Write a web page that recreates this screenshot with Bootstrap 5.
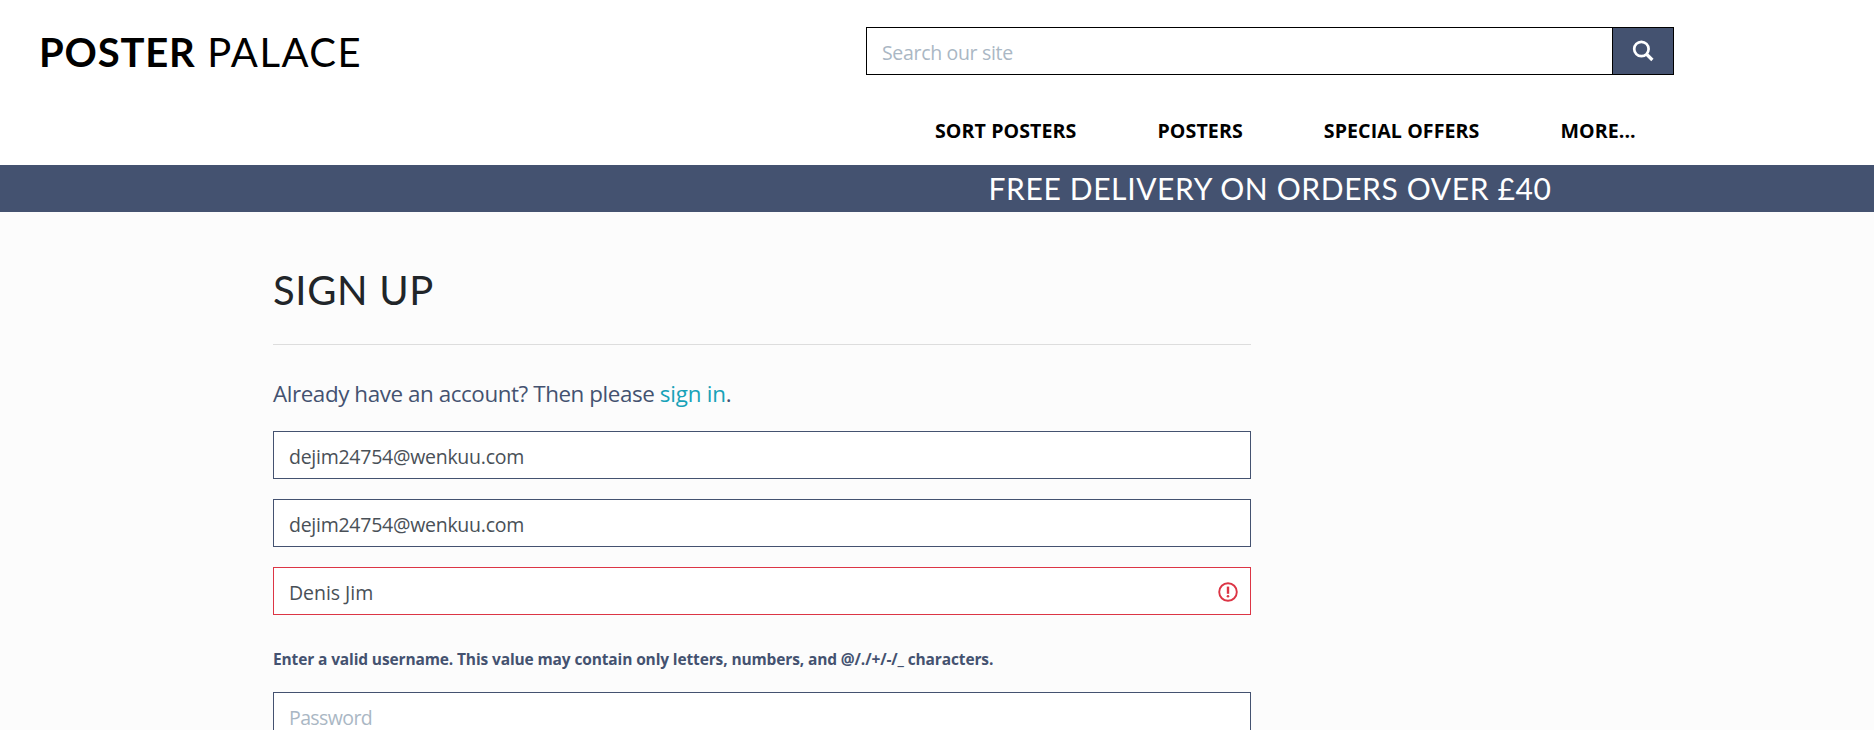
<!DOCTYPE html>
<html lang="en">
<head>
<meta charset="utf-8">
<meta name="viewport" content="width=device-width, initial-scale=1">
<title>Poster Palace - Sign Up</title>
<link rel="stylesheet" href="https://cdn.jsdelivr.net/npm/bootstrap@5.3.0/dist/css/bootstrap.min.css">
<style>
  :root { --slate: #445270; }
  html, body { height: 100%; overflow: hidden; }
  body { font-family: "Open Sans", "Noto Sans", sans-serif; background: #fcfcfc; }
  .display-font { font-family: Lato, sans-serif; line-height: 1.2; }
  .site-header { height: 165px; padding-left: 39px; }
  .brand { font-size: 40px; padding-top: 28px; color: #000; letter-spacing: 1.5px; }
  .brand strong { letter-spacing: .8px; font-weight: 700; }
  .header-side { width: 808px; margin-right: 200px; padding-top: 27px; }
  .form-control { height: 48px; padding: 3px 15px 0; border-radius: 0; font-size: 19.5px; letter-spacing: -.26px; color: #495057; background-color: #fff; border-color: var(--slate); }
  .form-control::placeholder { color: #aab7c4; opacity: 1; letter-spacing: -.6px; }
  .search-box .form-control { border-color: #000; }
  .search-box .form-control::placeholder { letter-spacing: -.32px; }
  .btn-search { width: 62px; border: 1px solid #000; border-radius: 0; background: var(--slate); padding: 0 0 1px; }
  .site-nav { gap: 81px; margin-top: 42px; padding-left: 69px; }
  .site-nav .nav-link { padding: 0; color: #000; font-weight: 700; font-size: 19.6px; letter-spacing: .08px; line-height: 28px; white-space: nowrap; }
  .promo { height: 47px; background: var(--slate); color: #fff; }
  .promo p { width: 808px; margin-right: 200px; font-size: 30px; letter-spacing: .63px; line-height: 46px; }
  .signup { width: 978px; margin-left: 273px; padding-top: 54px; }
  .signup h1 { font-size: 40px; font-weight: 400; letter-spacing: .65px; color: #212529; }
  .signup hr { margin: 30px 0 0; border-color: #000; opacity: .12; }
  .intro { margin-top: 32px; font-size: 22.4px; letter-spacing: -.42px; line-height: 34px; color: var(--slate); }
  .intro a { color: #17a2b8; letter-spacing: -.2px; }
  .signup-form { display: grid; gap: 20px; margin-top: 20px; }
  .name-field.is-invalid, .name-field.is-invalid:focus { border-color: #dc3545; letter-spacing: -.04px; background-image: none; }
  .alert-mark { right: 13px; top: 15px; }
  .hint { margin: 12px 0 1px; font-size: 15.5px; font-weight: 700; letter-spacing: -.13px; line-height: 24px; color: var(--slate); }
</style>
<script src="https://cdn.jsdelivr.net/npm/bootstrap@5.3.0/dist/js/bootstrap.bundle.min.js"></script>
</head>
<body>
<header class="site-header bg-white d-flex justify-content-between">
  <a href="#" class="brand display-font text-decoration-none"><strong>POSTER</strong> PALACE</a>
  <div class="header-side">
    <form class="input-group search-box">
      <input class="form-control" type="text" placeholder="Search our site" aria-label="Search our site">
      <button class="btn btn-search d-flex align-items-center justify-content-center" type="button" aria-label="Search">
        <svg width="22" height="22" viewBox="0 0 22 22" fill="none" stroke="#fff"><circle cx="9.4" cy="9" r="7.2" stroke-width="2.7"/><path d="M14.4 14l6 6" stroke-width="3.2"/></svg>
      </button>
    </form>
    <nav class="nav site-nav flex-nowrap">
      <a class="nav-link" href="#">SORT POSTERS</a>
      <a class="nav-link" href="#">POSTERS</a>
      <a class="nav-link" href="#">SPECIAL OFFERS</a>
      <a class="nav-link" href="#">MORE...</a>
    </nav>
  </div>
</header>
<div class="promo d-flex justify-content-end">
  <p class="display-font mb-0 text-center text-nowrap">FREE DELIVERY ON ORDERS OVER £40</p>
</div>
<main class="signup">
  <h1 class="display-font mb-0">SIGN UP</h1>
  <hr>
  <p class="intro mb-0">Already have an account? Then please <a class="text-decoration-none" href="#">sign in</a>.</p>
  <form class="signup-form">
    <input class="form-control" type="email" value="dejim24754@wenkuu.com" aria-label="E-mail">
    <input class="form-control" type="email" value="dejim24754@wenkuu.com" aria-label="E-mail again">
    <div class="position-relative">
      <input class="form-control name-field is-invalid" type="text" value="Denis Jim" aria-label="Username">
      <svg class="alert-mark position-absolute" width="20" height="20" viewBox="0 0 20 20" fill="none" stroke="#dc3545"><circle cx="10" cy="10" r="8.8" stroke-width="1.9"/><path d="M10 4.6v7.2" stroke-width="2.4"/><circle cx="10" cy="14.2" r="1.3" fill="#dc3545" stroke="none"/></svg>
    </div>
    <p class="hint">Enter a valid username. This value may contain only letters, numbers, and @/./+/-/_ characters.</p>
    <input class="form-control" type="password" placeholder="Password" aria-label="Password">
  </form>
</main>
</body>
</html>
